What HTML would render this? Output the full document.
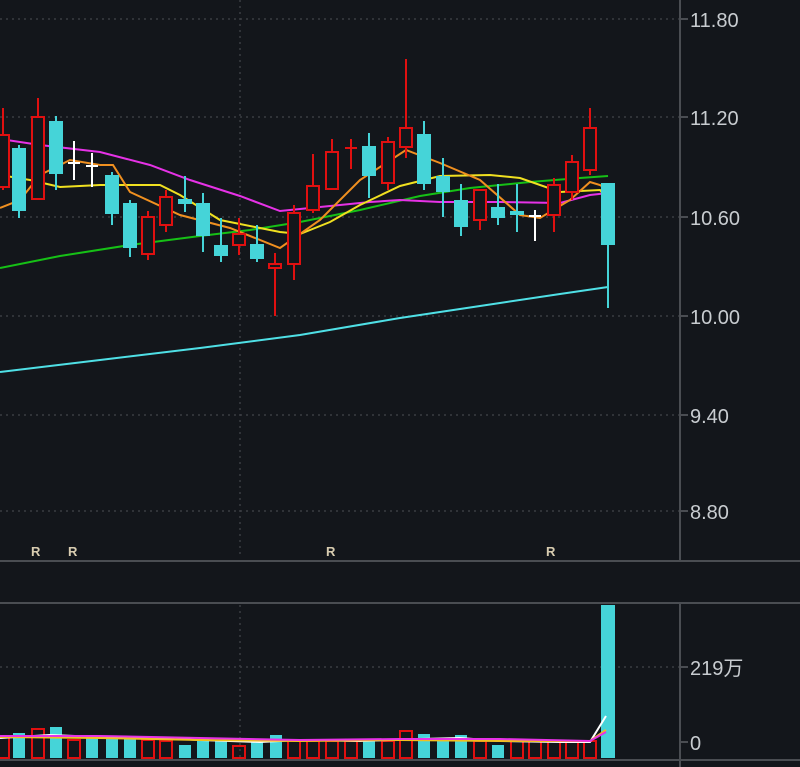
<!DOCTYPE html>
<html><head><meta charset="utf-8"><style>
html,body{margin:0;padding:0;background:#13161b;}
svg{display:block}
text{font-family:"Liberation Sans","Noto Sans CJK SC",sans-serif;}
</style></head><body>
<svg width="800" height="767" viewBox="0 0 800 767" xmlns="http://www.w3.org/2000/svg">
<rect width="800" height="767" fill="#13161b"/>
<g stroke="#3a3d42" stroke-width="1.5" stroke-dasharray="2,4">
<line x1="0" y1="19" x2="680" y2="19"/><line x1="0" y1="117" x2="680" y2="117"/>
<line x1="0" y1="217" x2="680" y2="217"/><line x1="0" y1="316" x2="680" y2="316"/>
<line x1="0" y1="415" x2="680" y2="415"/><line x1="0" y1="511" x2="680" y2="511"/>
<line x1="240" y1="0" x2="240" y2="558"/><line x1="240" y1="605" x2="240" y2="758"/>
<line x1="0" y1="667" x2="680" y2="667"/>
</g>
<g stroke="#4a4d52" stroke-width="2">
<line x1="680" y1="0" x2="680" y2="561"/>
<line x1="680" y1="603" x2="680" y2="767"/>
<line x1="0" y1="561" x2="800" y2="561"/>
<line x1="0" y1="603" x2="800" y2="603"/>
<line x1="0" y1="760" x2="800" y2="760"/>
<line x1="680" y1="19" x2="688" y2="19"/><line x1="680" y1="117" x2="688" y2="117"/>
<line x1="680" y1="217" x2="688" y2="217"/><line x1="680" y1="316" x2="688" y2="316"/>
<line x1="680" y1="415" x2="688" y2="415"/><line x1="680" y1="511" x2="688" y2="511"/>
<line x1="680" y1="667" x2="688" y2="667"/><line x1="680" y1="742" x2="688" y2="742"/>
</g>
<g fill="#c8ccd0" font-size="20">
<text x="690" y="27">11.80</text><text x="690" y="125">11.20</text>
<text x="690" y="225">10.60</text><text x="690" y="324">10.00</text>
<text x="690" y="423">9.40</text><text x="690" y="519">8.80</text>
<text x="690" y="675">219万</text><text x="690" y="750">0</text>
</g>
<g fill="#d8ccb0" font-size="13" font-weight="bold">
<text x="31" y="556">R</text><text x="68" y="556">R</text><text x="326" y="556">R</text><text x="546" y="556">R</text>
</g>
<g fill="none" stroke-width="2">
<polyline stroke="#4fe0e6" points="0,372 100,360 200,348 300,335 400,318 500,303 560,294 608,287"/>
<polyline stroke="#16c016" points="0,268 60,256 130,245 200,236 250,230 300,222 360,210 420,196 470,188 530,182 580,178 608,176"/>
<polyline stroke="#e632e6" points="0,139 40,145 100,152 150,165 190,180 240,196 280,211 320,207 370,202 400,200 440,202 500,202 560,203 590,195 608,193"/>
<polyline stroke="#f0e020" points="0,175 30,180 60,187 100,185 160,185 180,195 220,220 280,232 300,234 330,222 360,205 400,186 440,176 490,175 520,178 560,192 600,190 608,200"/>
<polyline stroke="#f09020" points="0,208 20,200 40,175 70,160 100,165 113,165 130,192 180,215 230,228 280,248 320,220 360,180 406,150 440,163 480,180 520,215 540,218 570,200 590,182 600,185 608,190"/>
</g>
<g stroke-width="2">
<g stroke="#e01010" fill="#13161b">
<line x1="3" y1="108" x2="3" y2="190"/><rect x="-3" y="135" width="12" height="52"/>
<line x1="38" y1="98" x2="38" y2="200"/><rect x="32" y="117" width="12" height="82"/>
<line x1="148" y1="211" x2="148" y2="260"/><rect x="142" y="217" width="12" height="37"/>
<line x1="166" y1="190" x2="166" y2="232"/><rect x="160" y="197" width="12" height="28"/>
<line x1="239" y1="218" x2="239" y2="255"/><rect x="233" y="234" width="12" height="11"/>
<line x1="275" y1="253" x2="275" y2="316"/><rect x="269" y="264" width="12" height="4"/>
<line x1="294" y1="205" x2="294" y2="280"/><rect x="288" y="213" width="12" height="51"/>
<line x1="313" y1="154" x2="313" y2="213"/><rect x="307" y="186" width="12" height="24"/>
<line x1="332" y1="139" x2="332" y2="190"/><rect x="326" y="152" width="12" height="37"/>
<line x1="351" y1="139" x2="351" y2="169"/><line x1="345" y1="148" x2="357" y2="148"/>
<line x1="388" y1="137" x2="388" y2="190"/><rect x="382" y="142" width="12" height="41"/>
<line x1="406" y1="59" x2="406" y2="158"/><rect x="400" y="128" width="12" height="19"/>
<line x1="480" y1="190" x2="480" y2="230"/><rect x="474" y="190" width="12" height="30"/>
<line x1="554" y1="178" x2="554" y2="232"/><rect x="548" y="185" width="12" height="30"/>
<line x1="572" y1="155" x2="572" y2="200"/><rect x="566" y="162" width="12" height="30"/>
<line x1="590" y1="108" x2="590" y2="175"/><rect x="584" y="128" width="12" height="42"/>
</g>
<g stroke="#45d4d8" fill="#45d4d8">
<line x1="19" y1="145" x2="19" y2="218"/><rect x="13" y="149" width="12" height="61"/>
<line x1="56" y1="116" x2="56" y2="190"/><rect x="50" y="122" width="12" height="51"/>
<line x1="112" y1="172" x2="112" y2="225"/><rect x="106" y="176" width="12" height="37"/>
<line x1="130" y1="200" x2="130" y2="257"/><rect x="124" y="204" width="12" height="43"/>
<line x1="185" y1="176" x2="185" y2="212"/><rect x="179" y="200" width="12" height="3"/>
<line x1="203" y1="193" x2="203" y2="252"/><rect x="197" y="204" width="12" height="31"/>
<line x1="221" y1="218" x2="221" y2="262"/><rect x="215" y="246" width="12" height="9"/>
<line x1="257" y1="225" x2="257" y2="262"/><rect x="251" y="245" width="12" height="13"/>
<line x1="369" y1="133" x2="369" y2="198"/><rect x="363" y="147" width="12" height="28"/>
<line x1="424" y1="121" x2="424" y2="190"/><rect x="418" y="135" width="12" height="48"/>
<line x1="443" y1="158" x2="443" y2="217"/><rect x="437" y="177" width="12" height="14"/>
<line x1="461" y1="184" x2="461" y2="236"/><rect x="455" y="201" width="12" height="25"/>
<line x1="498" y1="184" x2="498" y2="225"/><rect x="492" y="208" width="12" height="9"/>
<line x1="517" y1="184" x2="517" y2="232"/><rect x="511" y="212" width="12" height="2"/>
<line x1="608" y1="184" x2="608" y2="308"/><rect x="602" y="184" width="12" height="60"/>
</g>
<g stroke="#ffffff">
<line x1="74" y1="141" x2="74" y2="180"/><line x1="68" y1="163" x2="80" y2="163"/>
<line x1="92" y1="153" x2="92" y2="187"/><line x1="86" y1="166" x2="98" y2="166"/>
<line x1="535" y1="210" x2="535" y2="241"/><line x1="529" y1="216" x2="541" y2="216"/>
</g>
</g>
<g stroke-width="2">
<g fill="#45d4d8">
<rect x="13" y="733" width="12" height="25"/><rect x="50" y="727" width="12" height="31"/>
<rect x="86" y="738" width="12" height="20"/><rect x="106" y="737" width="12" height="21"/>
<rect x="124" y="738" width="12" height="20"/><rect x="179" y="745" width="12" height="13"/>
<rect x="197" y="739" width="12" height="19"/><rect x="215" y="740" width="12" height="18"/>
<rect x="251" y="742" width="12" height="16"/><rect x="270" y="735" width="12" height="23"/>
<rect x="363" y="740" width="12" height="18"/><rect x="418" y="734" width="12" height="24"/>
<rect x="437" y="740" width="12" height="18"/><rect x="455" y="735" width="12" height="23"/>
<rect x="492" y="745" width="12" height="13"/><rect x="601" y="605" width="14" height="153"/>
</g>
<g stroke="#e01010" fill="none">
<rect x="-3" y="736" width="12" height="22"/><rect x="32" y="729" width="12" height="29"/>
<rect x="68" y="740" width="12" height="18"/><rect x="142" y="740" width="12" height="18"/>
<rect x="160" y="741" width="12" height="17"/><rect x="233" y="746" width="12" height="12"/>
<rect x="288" y="741" width="12" height="17"/><rect x="307" y="741" width="12" height="17"/>
<rect x="326" y="741" width="12" height="17"/><rect x="345" y="741" width="12" height="17"/>
<rect x="382" y="741" width="12" height="17"/><rect x="400" y="731" width="12" height="27"/>
<rect x="474" y="741" width="12" height="17"/><rect x="511" y="741" width="12" height="17"/>
<rect x="529" y="741" width="12" height="17"/><rect x="548" y="741" width="12" height="17"/>
<rect x="566" y="741" width="12" height="17"/><rect x="584" y="741" width="12" height="17"/>
</g>
<polyline fill="none" stroke="#ffffff" points="0,738 50,735 100,737 160,738 200,740 260,742 300,740 360,741 420,739 460,738 500,741 560,742 590,742 606,716"/>
<polyline fill="none" stroke="#f0c020" points="0,737 100,738 200,740 300,741 400,740 500,741 590,741 606,730"/>
<polyline fill="none" stroke="#e632e6" points="0,736 100,736 200,738 300,740 400,739 500,739 590,741 606,732"/>
</g>
</svg>
</body></html>
